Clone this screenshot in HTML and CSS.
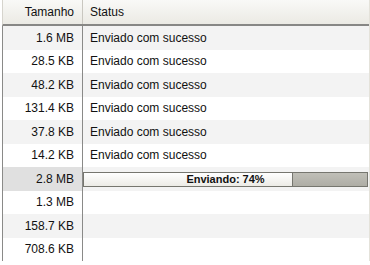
FILE: index.html
```html
<!DOCTYPE html>
<html lang="pt">
<head>
  <meta charset="UTF-8">
  <title>Envios</title>
  <link rel="stylesheet" href="styles.css">
</head>
<body>
  <div class="list">
    <div class="row head">
      <div class="size">Tamanho</div>
      <div class="status">Status</div>
    </div>
    <div class="row"><div class="size">1.6 MB</div><div class="status">Enviado com sucesso</div></div>
    <div class="row"><div class="size">28.5 KB</div><div class="status">Enviado com sucesso</div></div>
    <div class="row"><div class="size">48.2 KB</div><div class="status">Enviado com sucesso</div></div>
    <div class="row"><div class="size">131.4 KB</div><div class="status">Enviado com sucesso</div></div>
    <div class="row"><div class="size">37.8 KB</div><div class="status">Enviado com sucesso</div></div>
    <div class="row"><div class="size">14.2 KB</div><div class="status">Enviado com sucesso</div></div>
    <div class="row active">
      <div class="size">2.8 MB</div>
      <div class="status">
        <div class="progress">
          <div class="fill" style="width: 74%"></div>
          <span class="label">Enviando: 74%</span>
        </div>
      </div>
    </div>
    <div class="row"><div class="size">1.3 MB</div><div class="status"></div></div>
    <div class="row"><div class="size">158.7 KB</div><div class="status"></div></div>
    <div class="row"><div class="size">708.6 KB</div><div class="status"></div></div>
  </div>
</body>
</html>
```

FILE: styles.css
```css
body {
  margin: 0;
  background: #fff;
  font-family: "Liberation Sans", Arial, sans-serif;
  font-size: 12px;
  color: #111;
}
.list {
  width: 366px;
  margin-left: 2px;
  border-left: 1px solid #8a8a88;
  border-right: 1px solid #e4e2da;
}
.row {
  display: grid;
  grid-template-columns: 80px 1fr;
  height: 23.5px;
  align-items: center;
}
.row:nth-child(even) {
  background: #f3f3f3;
}
.size {
  height: 100%;
  display: flex;
  align-items: center;
  justify-content: flex-end;
  padding-right: 8px;
  border-right: 1px solid #8a8a88;
}
.status {
  height: 100%;
  display: flex;
  align-items: center;
  padding-left: 7px;
}
.head {
  height: 24px;
  border-bottom: 2px solid #878785;
  margin-left: -1px;
  border-left: 1px solid #d6d4cd;
  background: linear-gradient(#f9f9f7, #ebeae4);
}
.head .size {
  border-right: 1px solid #c9c7c0;
}
.active .size {
  background: #e0e0e0;
}
.active .status {
  padding: 0 1px 0 0;
}
.progress {
  position: relative;
  flex: 1;
  height: 13px;
  margin-top: 2px;
  border: 1px solid #76766f;
  background: linear-gradient(#c0bfb8, #aeada5);
}
.fill {
  height: 100%;
  background: linear-gradient(#ffffff, #ecebe6);
  border-right: 1px solid #76766f;
  box-sizing: border-box;
}
.label {
  position: absolute;
  left: 0;
  right: 0;
  top: 0;
  line-height: 13px;
  text-align: center;
  font-weight: bold;
  font-size: 11px;
}
```
